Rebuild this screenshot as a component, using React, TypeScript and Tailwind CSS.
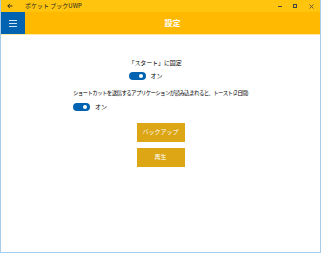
import React from 'react';

const jp = { fontFamily: '"Noto Sans CJK JP", "Noto Sans", sans-serif' };

function Toggle() {
  return (
    <div className="flex items-center gap-[5px]">
      <div className="relative h-[8px] w-[17px] rounded-full bg-[#0063b1]">
        <div className="absolute right-[3px] top-[2px] h-[4px] w-[4px] rounded-full bg-white" />
      </div>
      <span className="text-[6px] leading-none text-black">オン</span>
    </div>
  );
}

export default function App() {
  return (
    <div
      className="flex h-[253px] w-[321px] flex-col overflow-hidden border-x border-b border-[#a8cdea] bg-white"
      style={jp}
    >
      {/* title bar */}
      <div className="flex h-[12px] items-center bg-[#ffc40d] pl-[6px] text-[#333]">
        <svg width="6" height="6" viewBox="0 0 6 6" className="mr-[12px]">
          <path d="M5.5 3H0.8M3 0.8L0.8 3L3 5.2" stroke="#222" strokeWidth="0.9" fill="none" />
        </svg>
        <span className="text-[6px] leading-none text-[#222]">ポケット ブックUWP</span>
        <div className="ml-auto flex h-full items-center">
          <div className="flex h-full w-[15px] items-center justify-center">
            <div className="h-px w-[4px] bg-[#444]" />
          </div>
          <div className="flex h-full w-[15px] items-center justify-center">
            <div className="h-[4px] w-[4px] border border-[#444]" />
          </div>
          <div className="flex h-full w-[18px] items-center justify-center">
            <svg width="5" height="5" viewBox="0 0 5 5">
              <path d="M0.5 0.5L4.5 4.5M4.5 0.5L0.5 4.5" stroke="#444" strokeWidth="0.8" />
            </svg>
          </div>
        </div>
      </div>

      {/* header */}
      <div className="flex h-[22px] items-center bg-[#ffb900]">
        <div className="flex h-full w-[24px] flex-col items-center justify-center gap-[2px] bg-[#0063b1]">
          <div className="h-px w-[8px] bg-[#d0e3f3]" />
          <div className="h-px w-[8px] bg-[#d0e3f3]" />
          <div className="h-px w-[8px] bg-[#d0e3f3]" />
        </div>
        <div className="flex-1 text-center text-[8px] font-bold leading-none text-white">設定</div>
      </div>
      <div className="h-px bg-[#ffe9a6]" />

      {/* content */}
      <div className="flex flex-col items-center pt-[25px]">
        <div className="ml-[-2px] flex w-[62px] flex-col gap-[6px]">
          <span className="text-[6px] leading-none tracking-[-0.1px] text-black">「スタート」に固定</span>
          <Toggle />
        </div>
        <div className="mt-[11px] flex flex-col gap-[6px]">
          <span className="text-[5.5px] leading-none tracking-[-0.65px] text-black">
            ショートカットを送信するアプリケーションが読み込まれると、トースト (2 日間)
          </span>
          <Toggle />
        </div>
        <div className="mt-[12px] flex flex-col gap-[6px]">
          <button className="flex h-[19px] w-[48px] items-center justify-center bg-[#dca614] text-[6px] leading-none text-white">
            バックアップ
          </button>
          <button className="flex h-[19px] w-[48px] items-center justify-center bg-[#dca614] text-[6px] leading-none text-white">
            再生
          </button>
        </div>
      </div>
    </div>
  );
}
